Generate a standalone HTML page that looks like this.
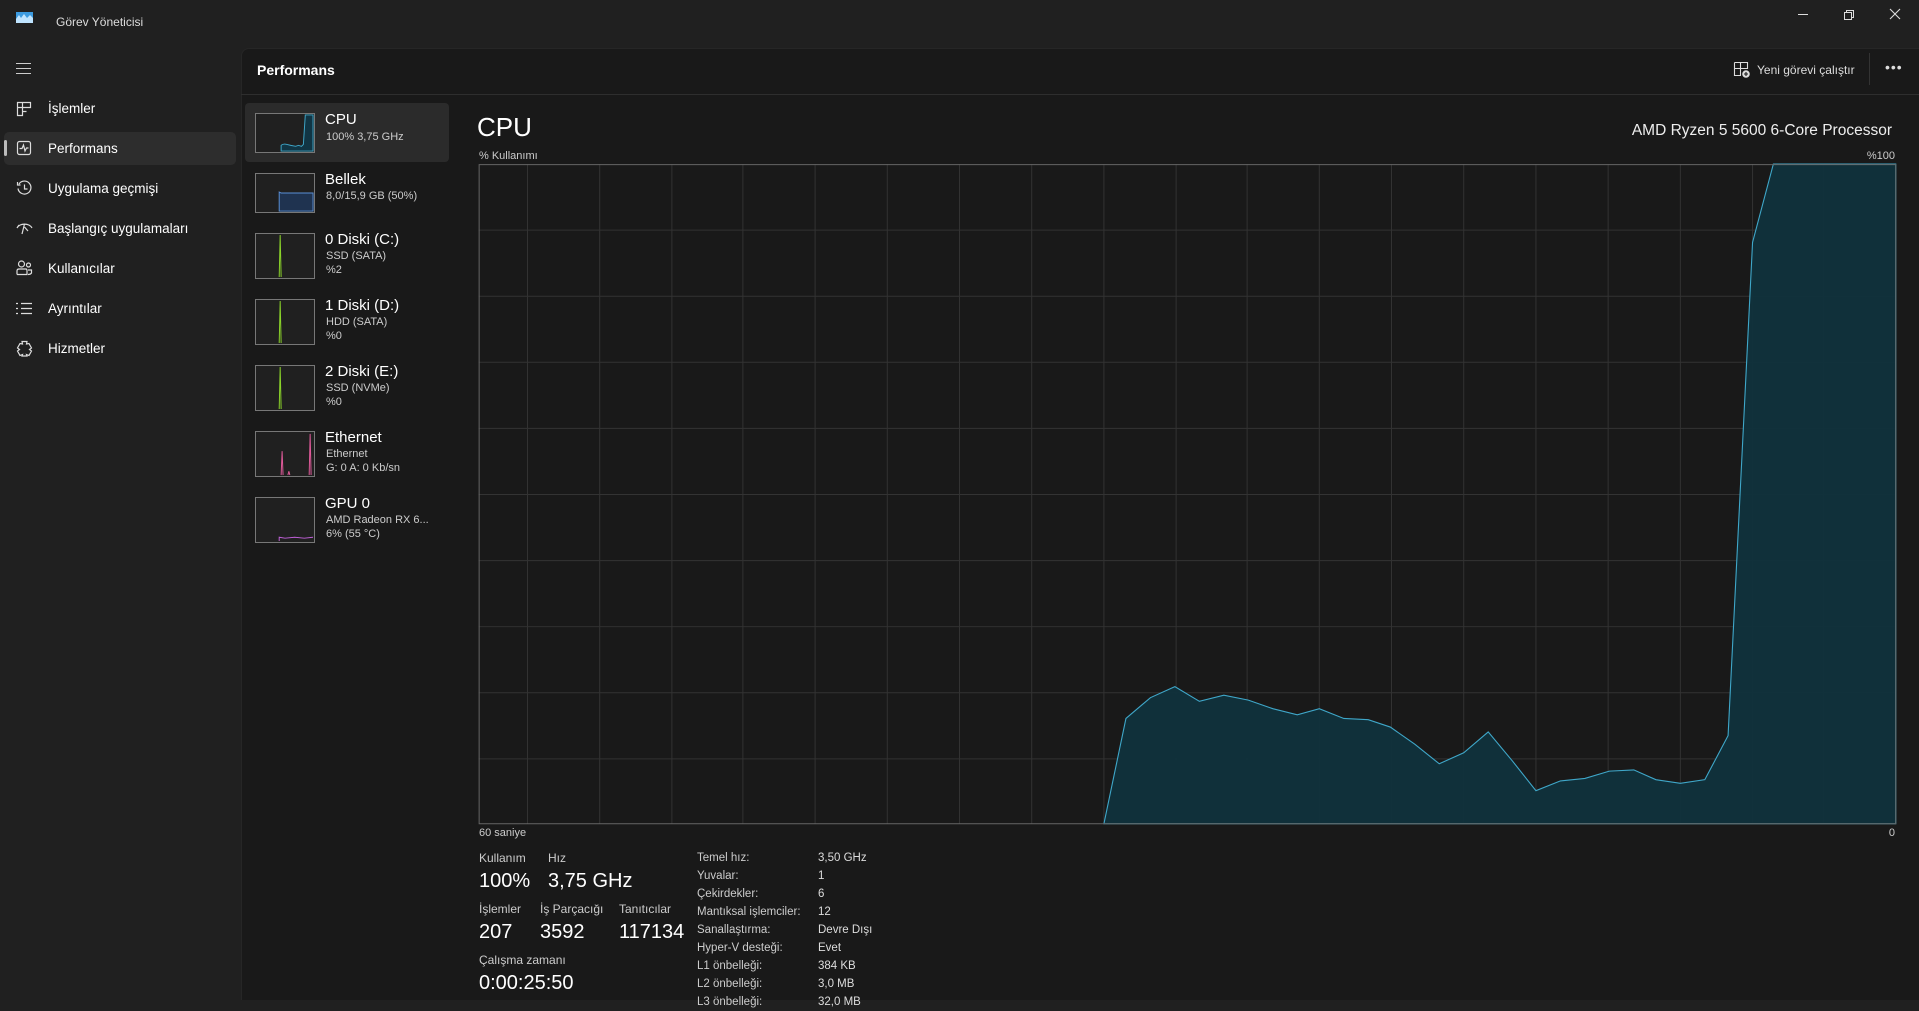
<!DOCTYPE html>
<html><head><meta charset="utf-8"><style>
*{margin:0;padding:0;box-sizing:border-box}
body{width:1919px;height:1000px;background:#202020;font-family:"Liberation Sans",sans-serif;color:#fff;position:relative;overflow:hidden}
.a{position:absolute;white-space:nowrap}
.nav{font-size:13.5px;color:#fff;left:48px}
.ic{position:absolute;left:16px}
.th{position:absolute;left:255px;width:60px;border:1px solid #777;background:#202020}
.pt{position:absolute;left:325px;font-size:15px;color:#fff}
.ps{position:absolute;left:326px;font-size:11px;color:#ccc;line-height:14px}
.lb{font-size:12px;color:#ccc}
.bv{font-size:20px;color:#fff}
.r{font-size:11.5px;color:#ddd}
</style></head><body>
<!-- title bar -->
<svg class="a" style="left:16px;top:12px" width="17" height="11"><rect width="17" height="11" fill="#3c9be0"/><path d="M0 7 L3 3 L5 6 L8 2 L11 6 L14 3 L17 6 V11 H0Z" fill="#bfe4ff"/></svg>
<div class="a" style="left:56px;top:15px;font-size:12px;color:#ddd">Görev Yöneticisi</div>
<div class="a" style="left:1798px;top:14px;width:10px;height:1px;background:#ddd"></div>
<svg class="a" style="left:1843px;top:9px" width="12" height="12" fill="none" stroke="#ddd"><rect x="1.5" y="3.5" width="7" height="7"/><path d="M3.5 3.5V1.5H10.5V8.5H8.5"/></svg>
<svg class="a" style="left:1889px;top:8px" width="12" height="12" stroke="#ddd" stroke-width="1.1"><path d="M1 1L11 11M11 1L1 11"/></svg>
<!-- sidebar -->
<svg class="a" style="left:16px;top:62px" width="16" height="12" stroke="#ccc"><path d="M0 1.5H15M0 6.5H15M0 11.5H15"/></svg>
<div class="a" style="left:4px;top:132px;width:232px;height:33px;background:#2d2d2d;border-radius:5px"></div>
<div class="a" style="left:4px;top:140px;width:3px;height:16px;background:#bbb;border-radius:2px"></div>
<svg class="ic" style="top:101px" width="16" height="16" fill="none" stroke="#ddd" stroke-width="1.2"><path d="M1.5 1.5H14.5V6.5H1.5ZM1.5 6.5V14.5H6.5V1.5M6.5 10.5H10.5"/></svg>
<div class="a nav" style="top:101px">İşlemler</div>
<svg class="ic" style="top:140px" width="16" height="16" fill="none" stroke="#ddd" stroke-width="1.2"><rect x="1.5" y="1.5" width="13" height="13" rx="2"/><path d="M3.5 8.5H6L7.5 5L9 11L10.5 8H12.5"/></svg>
<div class="a nav" style="top:141px">Performans</div>
<svg class="ic" style="top:180px" width="17" height="17" fill="none" stroke="#ddd" stroke-width="1.2"><path d="M3 4A6.5 6.5 0 1 1 2 8.5M1.5 2V5H4.5M8.5 4.5V9H11.5"/></svg>
<div class="a nav" style="top:181px">Uygulama geçmişi</div>
<svg class="ic" style="top:222px" width="17" height="14" fill="none" stroke="#ddd" stroke-width="1.2"><path d="M1 6A8 6 0 0 1 16 6M8.5 2L6 12M8.5 5L12 9M3 3L1 6"/></svg>
<div class="a nav" style="top:221px">Başlangıç uygulamaları</div>
<svg class="ic" style="top:260px" width="17" height="16" fill="none" stroke="#ddd" stroke-width="1.2"><circle cx="5.5" cy="4" r="3"/><circle cx="12.5" cy="5" r="2"/><path d="M1 14.5V11Q1 9 3 9H10Q11 9 11 11V14.5H1M12 10H15.5V13Q14.5 14.5 12 14.5"/></svg>
<div class="a nav" style="top:261px">Kullanıcılar</div>
<svg class="ic" style="top:302px" width="17" height="13" fill="none" stroke="#ddd" stroke-width="1.2"><path d="M0 1.5H2M0 6.5H2M0 11.5H2M5 1.5H16M5 6.5H16M5 11.5H16"/></svg>
<div class="a nav" style="top:301px">Ayrıntılar</div>
<svg class="ic" style="top:340px" width="17" height="17" fill="none" stroke="#ddd" stroke-width="1.2"><path d="M6 1.5H11L10.5 4L13 3.5L15.5 8L13.5 9.5L15.5 11L13 15.5L10.5 14.5L11 16H6L6.5 14.5L4 15.5L1.5 11L3.5 9.5L1.5 8L4 3.5L6.5 4Z"/></svg>
<div class="a nav" style="top:341px">Hizmetler</div>
<!-- content panel -->
<div class="a" style="left:241px;top:48px;width:1678px;height:952px;background:#191919;border-top-left-radius:8px;border-top:1px solid #262626;border-left:1px solid #262626"></div>
<div class="a" style="left:257px;top:62px;font-size:14px;font-weight:bold;color:#fff">Performans</div>
<div class="a" style="left:241px;top:94px;width:1678px;height:1px;background:#2e2e2e"></div>
<svg class="a" style="left:1733px;top:61px" width="17" height="17" fill="none" stroke="#ddd" stroke-width="1.1"><path d="M1.5 1.5H14.5V8M1.5 1.5V14.5H8M1.5 7.5H14.5M7.5 1.5V14.5"/><circle cx="13" cy="13" r="3.8" fill="#ddd" stroke="none"/><path d="M13 11V15M11 13H15" stroke="#191919"/></svg>
<div class="a" style="left:1757px;top:63px;font-size:12px;color:#ddd">Yeni görevi çalıştır</div>
<div class="a" style="left:1869px;top:53px;width:1px;height:32px;background:#333"></div>
<div class="a" style="left:1885px;top:59px;font-size:14px;color:#ddd;letter-spacing:1px">•••</div>
<!-- perf list -->
<div class="a" style="left:245px;top:103px;width:204px;height:59px;background:#2b2b2b;border-radius:4px"></div>
<svg class="th" style="top:113px;height:40px" viewBox="0 0 60 40" preserveAspectRatio="none"><path d="M26 39V33Q28 31 32 32L36 33L41 34L44 33L47 34L49 32L51 1H59V39Z" fill="#113544" stroke="#3fa7c9"/></svg>
<div class="pt" style="top:111px">CPU</div><div class="ps" style="top:130px">100% 3,75 GHz</div>
<svg class="th" style="top:173px;height:40px" viewBox="0 0 60 40" preserveAspectRatio="none"><path d="M24 39V19L26 20H59V39Z" fill="#1f3350" stroke="#5a8fd6"/></svg>
<div class="pt" style="top:171px">Bellek</div><div class="ps" style="top:189px">8,0/15,9 GB (50%)</div>
<svg class="th" style="top:233px;height:46px" viewBox="0 0 60 46" preserveAspectRatio="none"><path d="M24 45L25 1L26 45" fill="none" stroke="#8bd42a"/></svg>
<div class="pt" style="top:231px">0 Diski (C:)</div><div class="ps" style="top:249px">SSD (SATA)<br>%2</div>
<svg class="th" style="top:299px;height:46px" viewBox="0 0 60 46" preserveAspectRatio="none"><path d="M24 45L25 1L26 45" fill="none" stroke="#8bd42a"/></svg>
<div class="pt" style="top:297px">1 Diski (D:)</div><div class="ps" style="top:315px">HDD (SATA)<br>%0</div>
<svg class="th" style="top:365px;height:46px" viewBox="0 0 60 46" preserveAspectRatio="none"><path d="M24 45L25 1L26 45" fill="none" stroke="#8bd42a"/></svg>
<div class="pt" style="top:363px">2 Diski (E:)</div><div class="ps" style="top:381px">SSD (NVMe)<br>%0</div>
<svg class="th" style="top:431px;height:46px" viewBox="0 0 60 46" preserveAspectRatio="none"><path d="M26 45L27 20L28 45M33 45L34 41L35 45M55 45L56 2L57 45" fill="none" stroke="#e05a9a"/></svg>
<div class="pt" style="top:429px">Ethernet</div><div class="ps" style="top:447px">Ethernet<br>G: 0 A: 0 Kb/sn</div>
<svg class="th" style="top:497px;height:46px" viewBox="0 0 60 46" preserveAspectRatio="none"><path d="M24 45V41L30 42L40 41L50 42L59 41" fill="none" stroke="#c060d8"/></svg>
<div class="pt" style="top:495px">GPU 0</div><div class="ps" style="top:513px">AMD Radeon RX 6...<br>6% (55 °C)</div>
<!-- main -->
<div class="a" style="left:477px;top:112px;font-size:26px;color:#fff">CPU</div>
<div class="a" style="right:27px;top:122px;font-size:15.5px;color:#eee">AMD Ryzen 5 5600 6-Core Processor</div>
<div class="a" style="left:479px;top:150px;font-size:11px;color:#ccc">% Kullanımı</div>
<div class="a" style="right:24px;top:150px;font-size:11px;color:#ccc">%100</div>
<svg class="a" style="left:0;top:0" width="1919" height="1000" viewBox="0 0 1568 817" preserveAspectRatio="none">
<g stroke="#333" stroke-width="0.8">
<path d="M431 134V673M490 134V673M549 134V673M607 134V673M666 134V673M725 134V673M784 134V673M843 134V673M902 134V673M961 134V673M1019 134V673M1078 134V673M1137 134V673M1196 134V673M1255 134V673M1314 134V673M1373 134V673M1432 134V673M1490 134V673"/>
<path d="M391 188H1549M391 242H1549M391 296H1549M391 350H1549M391 404H1549M391 458H1549M391 512H1549M391 566H1549M391 620H1549"/>
</g>
<path d="M902 673L920 587L940 570L960 561L980 573L1000 568L1020 572L1040 579L1060 584L1078 579L1098 587L1118 588L1136 594L1156 608L1176 624L1196 615L1216 598L1236 622L1255 646L1275 638L1295 636L1315 630L1335 629L1353 637L1373 640L1393 637L1412 601L1432 198L1449 134L1549 134V673Z" fill="#10313c" fill-opacity="0.95" stroke="#3fa7c9" stroke-width="0.9"/>
<rect x="391.5" y="134.5" width="1157.5" height="538.5" fill="none" stroke="#666" stroke-width="0.8"/>
</svg>
<div class="a" style="left:479px;top:827px;font-size:11px;color:#ccc">60 saniye</div>
<div class="a" style="right:24px;top:827px;font-size:11px;color:#ccc">0</div>
<div class="a lb" style="left:479px;top:851px">Kullanım</div>
<div class="a lb" style="left:548px;top:851px">Hız</div>
<div class="a bv" style="left:479px;top:870px">100%</div>
<div class="a bv" style="left:548px;top:870px">3,75 GHz</div>
<div class="a lb" style="left:479px;top:902px">İşlemler</div>
<div class="a lb" style="left:540px;top:902px">İş Parçacığı</div>
<div class="a lb" style="left:619px;top:902px">Tanıtıcılar</div>
<div class="a bv" style="left:479px;top:921px">207</div>
<div class="a bv" style="left:540px;top:921px">3592</div>
<div class="a bv" style="left:619px;top:921px">117134</div>
<div class="a lb" style="left:479px;top:953px">Çalışma zamanı</div>
<div class="a bv" style="left:479px;top:972px">0:00:25:50</div>
<div class="a r" style="left:697px;top:849px;line-height:18px;color:#ccc">Temel hız:<br>Yuvalar:<br>Çekirdekler:<br>Mantıksal işlemciler:<br>Sanallaştırma:<br>Hyper-V desteği:<br>L1 önbelleği:<br>L2 önbelleği:<br>L3 önbelleği:</div>
<div class="a r" style="left:818px;top:849px;line-height:18px">3,50 GHz<br>1<br>6<br>12<br>Devre Dışı<br>Evet<br>384 KB<br>3,0 MB<br>32,0 MB</div>
</body></html>
